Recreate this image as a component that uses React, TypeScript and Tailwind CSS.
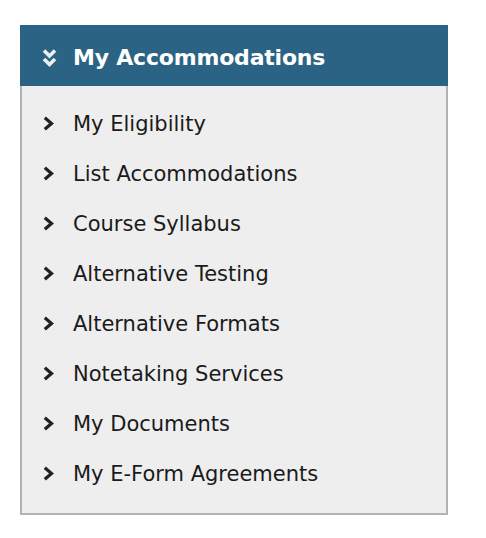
const links = [
  "My Eligibility",
  "List Accommodations",
  "Course Syllabus",
  "Alternative Testing",
  "Alternative Formats",
  "Notetaking Services",
  "My Documents",
  "My E-Form Agreements",
];

function DoubleChevron() {
  return (
    <svg width="15" height="21" viewBox="0 0 15 21" fill="none" stroke="currentColor" strokeWidth="3.6" strokeLinejoin="miter">
      <path d="M2 2.5 L7.5 8 L13 2.5" />
      <path d="M2 11 L7.5 16.5 L13 11" />
    </svg>
  );
}

function Chevron() {
  return (
    <svg width="11" height="15" viewBox="0 0 11 15" fill="none" stroke="currentColor" strokeWidth="3.2" strokeLinejoin="miter">
      <path d="M1.8 1.8 L8.5 7.5 L1.8 13.2" />
    </svg>
  );
}

export default function App() {
  return (
    <div className="min-h-screen bg-white pt-[25px] pl-[20px] font-['DejaVu_Sans',Verdana,sans-serif]">
      <div className="w-[428px] border-x-2 border-b-2 border-[#b3b3b3] bg-[#eeeeee]">
        <div className="-mx-[2px] flex h-[61px] items-center gap-[16px] bg-[#2a6384] pt-[3px] pl-[22px] text-white">
          <span className="mt-[3px] opacity-90">
            <DoubleChevron />
          </span>
          <span className="text-[22px] font-bold tracking-[-0.2px]">My Accommodations</span>
        </div>
        <ul className="pt-[14px] pb-[13px]">
          {links.map((label) => (
            <li key={label} className="flex h-[50px] items-center gap-[19px] pl-[21px] text-[21px] text-[#1a1a1a]">
              <span className="mb-[4px] text-[#222]">
                <Chevron />
              </span>
              <span>{label}</span>
            </li>
          ))}
        </ul>
      </div>
    </div>
  );
}
